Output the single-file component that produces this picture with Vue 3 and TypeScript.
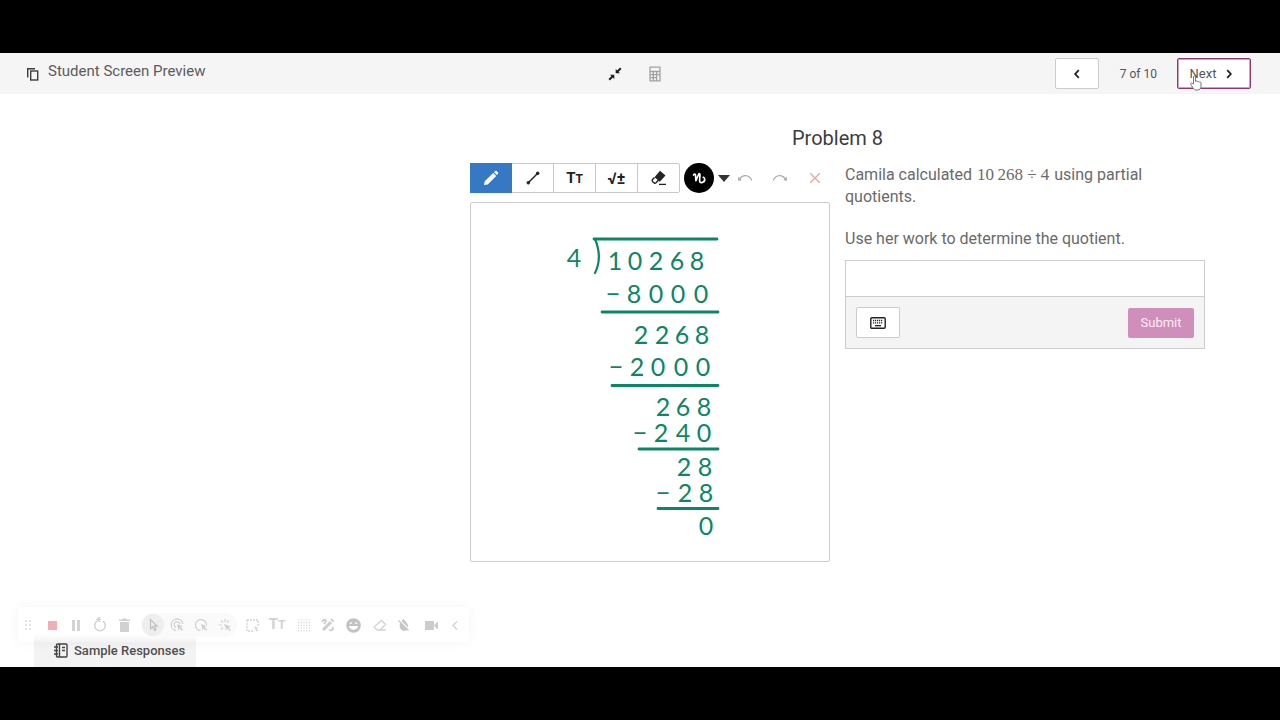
<script setup lang="ts">
import { ref } from 'vue'

interface InkRow {
  text: string
  x: number[]
  y: number
}

const answer = ref('')

const inkRows: InkRow[] = [
  { text: '4', x: [104], y: 65 },
  { text: '10268', x: [145, 165, 186, 207, 227], y: 68 },
  { text: '−8000', x: [143, 164, 186, 208, 231], y: 101 },
  { text: '2268', x: [171, 192, 212, 232], y: 142 },
  { text: '−2000', x: [146, 167, 188, 211, 233], y: 174 },
  { text: '268', x: [193, 213, 234], y: 214 },
  { text: '−240', x: [170, 191, 213, 234], y: 240 },
  { text: '28', x: [214, 235], y: 274 },
  { text: '−28', x: [193, 215, 236], y: 300 },
  { text: '0', x: [236], y: 333 },
]
</script>

<template>
  <div class="frame">
    <div class="app">
      <header class="topbar">
        <div class="brand">
          <svg width="14" height="14" viewBox="0 0 14 14" fill="none" stroke="#3c3c3c" stroke-width="1.4">
            <path d="M1.7 10.5V1.7H9" />
            <rect x="4.7" y="4" width="7" height="9" />
          </svg>
          <span>Student Screen Preview</span>
        </div>
        <div class="tools">
          <button class="plain" aria-label="Collapse">
            <svg width="16" height="16" viewBox="0 0 16 16" fill="#222" stroke="#222">
              <path d="M8.7 7.3V3l4.3 4.3z M7.3 8.7V13L3 8.700z" stroke="none" />
              <path d="M10 6l3.800-3.800M6 10l-3.800 3.800" stroke-width="2" />
            </svg>
          </button>
          <button class="plain" aria-label="Calculator">
            <svg width="16" height="16" viewBox="0 0 16 16" fill="none" stroke="#a2a2a2" stroke-width="1.300">
              <path d="M3 1.200h10v13.600H3zM3 5.500H13M3 8.600H13M3 11.700h6.600M6.300 5.500v9.300M9.600 5.500v9.300" />
            </svg>
          </button>
        </div>
        <nav class="pager">
          <button class="btn" aria-label="Previous">
            <svg width="8" height="10" viewBox="0 0 8 10" fill="none" stroke="#222" stroke-width="1.800"><path d="M5.800 1.200L2.200 5l3.600 3.800" /></svg>
          </button>
          <span class="count">7 of 10</span>
          <button class="btn next">
            <span>Next</span>
            <svg width="8" height="10" viewBox="0 0 8 10" fill="none" stroke="#222" stroke-width="1.800"><path d="M2.200 1.200L5.800 5 2.200 8.800" /></svg>
            <svg class="hand" width="12" height="16" viewBox="0 0 12 16" fill="#fff" stroke="#777" stroke-width="1">
              <path d="M3.500 9V2c0-1.600 2-1.600 2 0v4.500c.3-.9 1.900-.8 2 .3.400-.7 1.700-.6 1.800.4.500-.6 1.700-.3 1.700.8v3c0 2.600-1.300 4-3.500 4H6c-1.300 0-2-.6-2.700-1.700L.8 9.600c-.7-1.200.7-2.100 1.500-1.200z" />
            </svg>
          </button>
        </nav>
      </header>

      <main class="lesson">
        <h1>Problem 8</h1>
        <div class="columns">
          <section class="work">
            <div class="sketchbar">
              <div class="group">
                <button class="tool active" aria-label="Pencil">
                  <svg width="18" height="18" viewBox="0 0 18 18" fill="#fff"><path d="M2 16l.7-3.700L11.200 4l3 3-8.500 8.400zM12 3.200l1.200-1.100c.5-.5 1-.5 1.500 0L16 3.500c.4.4.4.900 0 1.300L15 6.100z" /></svg>
                </button>
                <button class="tool" aria-label="Line">
                  <svg width="16" height="16" viewBox="0 0 16 16" fill="#222" stroke="#222"><path d="M3.500 12.500l9-9" stroke-width="1.500" /><circle cx="3.300" cy="12.800" r="1.300" /><circle cx="12.700" cy="3.300" r="1.300" /></svg>
                </button>
                <button class="tool letters" aria-label="Text"><span>T</span><small>T</small></button>
                <button class="tool math" aria-label="Math">√±</button>
                <button class="tool" aria-label="Eraser">
                  <svg width="18" height="18" viewBox="0 0 18 18"><path d="M10 1.800l5.500 4.700-5.700 6.300-5.300-4.600z" fill="#222" /><path d="M4.500 8.500L2.400 10.700c-.5.700-.4 1.200.1 1.700l1.700 1.500c.6.500 1.300.4 1.800-.1l3-3.300" fill="none" stroke="#222" stroke-width="1.400" /><path d="M9 15.400h7" stroke="#222" stroke-width="1.300" /></svg>
                </button>
              </div>
              <button class="ink" aria-label="Pen colour">
                <svg width="16" height="16" viewBox="0 0 16 16" fill="none" stroke="#fff" stroke-width="1.700" stroke-linecap="round" stroke-linejoin="round"><path d="M2.500 5C3.800 3.600 4.500 4.200 4.600 6l.3 4.600L7.600 4.500c.6-1.200 1.500-1 1.400.3l-.4 5.400c-.1 1.700.7 2.700 2.200 2.400 2-.5 3.100-2 2.900-3.600-.1-.9-.7-1.500-1.500-1.700" /></svg>
              </button>
              <svg class="caret" width="12" height="7" viewBox="0 0 12 7" fill="#333"><path d="M0 0h12L6 7z" /></svg>
              <button class="edit undo" aria-label="Undo">
                <svg width="16" height="8" viewBox="0 0 16 8" fill="none" stroke="#aaa" stroke-width="1.200"><path d="M2.500 5.500C5.500.2 12 .2 14.800 6.500" /><path d="M.8 6.800l.6-4 3.400 3.500z" fill="#aaa" stroke="none" /></svg>
              </button>
              <button class="edit redo" aria-label="Redo">
                <svg width="16" height="8" viewBox="0 0 16 8" fill="none" stroke="#aaa" stroke-width="1.200"><path d="M13.500 5.500C10.500.2 4 .2 1.200 6.500" /><path d="M15.200 6.800l-.6-4-3.400 3.500z" fill="#aaa" stroke="none" /></svg>
              </button>
              <button class="edit clear" aria-label="Clear">
                <svg width="10" height="10" viewBox="0 0 10 10" stroke="#e5aaa8" stroke-width="1.400"><path d="M0 0l10 10M10 0L0 10" /></svg>
              </button>
            </div>
            <div class="canvas">
              <svg viewBox="1 1 358 358">
                <text v-for="row in inkRows" :key="row.y" :x="row.x.join(' ')" :y="row.y" text-anchor="middle">{{ row.text }}</text>
                <g fill="none" stroke="#0c8666" stroke-width="2.800" stroke-linecap="round">
                  <path d="M124 37H247" /><path d="M125 37c5 12 5 24 0 34" stroke-width="2.200" />
                  <path d="M132 110H248M142 183.500H248M169 247H248M188 306.500H248" />
                </g>
              </svg>
            </div>
          </section>

          <section class="question">
            <p>Camila calculated <span class="formula">10&#8201;268 ÷ 4</span> using partial quotients.</p>
            <p>Use her work to determine the quotient.</p>
            <form class="answer" @submit.prevent>
              <input v-model="answer" type="text" aria-label="Answer" />
              <div class="actions">
                <button type="button" class="btn" aria-label="Keyboard">
                  <svg width="16" height="12" viewBox="0 0 16 12" fill="none" stroke="#222"><rect x=".8" y=".8" width="14.400" height="10.400" rx="1" stroke-width="1.400" /><path d="M3 3.500h10M3 5.800h10" stroke-width="1.300" stroke-dasharray="1.200 .8" /><path d="M5 8.700h6" stroke-width="1.300" /></svg>
                </button>
                <button type="submit" class="submit">Submit</button>
              </div>
            </form>
          </section>
        </div>
      </main>

      <button class="responses">
        <svg width="14" height="15" viewBox="0 0 14 15" fill="none" stroke="#444" stroke-width="1.400"><rect x="2.500" y="1" width="10.500" height="13" rx="1" /><path d="M5.500 1v13M0 4h4M0 7.500h4M0 11h4M8 4.500h3M8 7.500h3" /></svg>
        <span>Sample Responses</span>
      </button>

      <div class="recorder">
        <svg width="22" height="24" viewBox="1 0 22 24" stroke="#ddd" stroke-width="2" stroke-dasharray="2 2"><path d="M9 7v11M13 7v11" /></svg>
        <svg width="24" height="24" viewBox="0 0 24 24"><path d="M8 8h9v9H8z" fill="#f0a0a8" /></svg>
        <svg width="24" height="24" viewBox="0 0 24 24" stroke="#ccc" stroke-width="3"><path d="M9.500 7v11M14.500 7v11" /></svg>
        <svg width="24" height="24" viewBox="0 0 24 24" fill="none" stroke="#ccc" stroke-width="1.500"><path d="M9 8.200a5.300 5.300 0 1 0 6 0M13 6.500H9.500M12 4L9 6.500 12 9" /></svg>
        <svg width="24" height="24" viewBox="0 0 24 24" fill="#c8c8c8"><path d="M7 6.500h3l1-1h3l1 1h3V8H7zM8 9h9v9c0 .6-.4 1-1 1H9c-.6 0-1-.4-1-1z" /></svg>
        <div class="modes">
          <span class="mode"><svg width="20" height="20" viewBox="0 0 20 20" fill="none" stroke="#bbb" stroke-width="1.300"><path d="M7.500 4.500v9.200l2.300-2 1.700 3.600 1.500-.7-1.600-3.500H14z" /></svg></span>
          <svg width="24" height="24" viewBox="0 0 24 24" fill="none" stroke="#ccc" stroke-width="1.300"><path d="M11 17.500A5.800 5.800 0 1 1 17.800 11M11 14.500A3 3 0 1 1 15 11" /><path d="M12 11l6 2.300-2.300 1 2.500 2.500-1.200 1.200-2.500-2.500-1 2.200z" fill="#ccc" stroke="none" /></svg>
          <svg width="24" height="24" viewBox="0 0 24 24" fill="none" stroke="#ccc" stroke-width="1.300"><path d="M11.500 17.500A5.500 5.500 0 1 1 17.500 12" /><path d="M12 11l6 2.300-2.300 1 2.500 2.500-1.200 1.200-2.500-2.500-1 2.200z" fill="#ccc" stroke="none" /></svg>
          <svg width="24" height="24" viewBox="0 0 24 24" stroke="#ccc" stroke-width="1.200"><path d="M6 12h3M8 7.500l2 2M12 6v3M16 7.500l-2 2M8 16.500l2-2" /><path d="M11 11l7 2.500-2.500 1 2.500 2.500-1 1-2.500-2.500-1 2.200z" fill="#ccc" stroke="none" /></svg>
        </div>
        <svg class="gap" width="24" height="24" viewBox="0 0 24 24" fill="none" stroke="#ccc" stroke-width="1.300"><path d="M7 7h11v7M7 7v11h7" stroke-dasharray="2 1" /><path d="M14 13l4.500 2-2 .8 1.500 2-1.200.8-1.300-2z" fill="#ccc" stroke="none" /></svg>
        <span class="letters faint"><span>T</span><small>T</small></span>
        <svg width="24" height="24" viewBox="0 0 24 24" stroke="#ccc" stroke-width="1.200" stroke-dasharray="1.200 1.500"><path d="M7 7h12M7 9.700h12M7 12.400h12M7 15.100h12M7 17.800h12" /></svg>
        <svg width="24" height="24" viewBox="0 0 24 24" fill="none" stroke="#c4c4c4" stroke-width="1.800"><path d="M7 9c1-3 5-3 3.500 0L9 11M14 17c3 1 5-1 3.500-3" /><path d="M8 17l8-8" stroke-width="3" /><path d="M16 6l2.500 2.500" /></svg>
        <svg class="face" width="24" height="24" viewBox="0 0 24 24"><circle cx="12.500" cy="12.500" r="7.300" fill="#b8b8b8" /><path d="M8 13h9c0 5-9 5-9 0zM8.500 10.700c.3-2 2.500-2 2.700 0M13.800 10.700c.3-2 2.500-2 2.700 0" fill="#fff" /></svg>
        <svg width="24" height="24" viewBox="0 0 24 24" fill="none" stroke="#ccc" stroke-width="1.300"><path d="M10 17l-3-3 7.500-6.500 4 4-5.500 5.500zM13 17h6" /></svg>
        <svg width="24" height="24" viewBox="0 0 24 24"><path d="M12.500 6c4 4.500 5 6 4.500 8.500L10.500 8zM9.300 9.800l7 7c-4 3-9.500-1-7-7z" fill="#bbb" /><path d="M7.500 7.500l10 10" stroke="#bbb" stroke-width="1.200" /></svg>
        <svg class="cam" width="24" height="24" viewBox="0 0 24 24" fill="#c4c4c4"><path d="M6 8h9v9H6zM15.500 11.500L19 8.500v8l-3.500-3z" /></svg>
        <svg width="24" height="24" viewBox="0 0 24 24" fill="none" stroke="#ccc" stroke-width="1.400"><path d="M14 8.500l-4 4 4 4" /></svg>
      </div>
    </div>
  </div>
</template>

<style>
body {
  margin: 0;
  background: #000;
}
</style>

<style scoped>
.frame {
  box-sizing: border-box;
  min-height: 100vh;
  padding: 53px 0;
  display: flex;
  flex-direction: column;
  background: #000;
  font-family: Roboto, "Liberation Sans", sans-serif;
  color: #6a6a6a;
}
.app {
  position: relative;
  flex: 1;
  display: flex;
  flex-direction: column;
  background: #fff;
}
button {
  font: inherit;
  color: inherit;
  padding: 0;
  border: 0;
  background: none;
}
svg {
  display: block;
  flex: none;
}
.topbar {
  display: grid;
  grid-template-columns: 1fr auto 1fr;
  align-items: center;
  height: 41px;
  padding: 0 29px 0 19px;
  background: #f5f5f5;
}
.brand {
  display: flex;
  align-items: center;
  gap: 8px;
  margin-left: 7px;
  font-size: 15px;
  line-height: 20px;
  color: #5c5c5c;
}
.brand span {
  padding-bottom: 5px;
}
.tools {
  display: flex;
  gap: 24px;
}
.pager {
  display: flex;
  justify-content: flex-end;
  align-items: center;
}
.count {
  margin: 0 20px 0 21px;
  font-size: 12px;
  color: #555;
}
.btn {
  box-sizing: border-box;
  display: flex;
  align-items: center;
  justify-content: center;
  width: 44px;
  height: 31px;
  border: 1px solid #ccc;
  border-radius: 2px;
  background: #fff;
}
.next {
  position: relative;
  gap: 9px;
  width: 74px;
  padding-right: 5px;
  border-color: #8a3a70;
  box-shadow: inset 0 0 0 1px #c9a3bc;
  font-size: 13px;
  color: #555;
}
.hand {
  position: absolute;
  left: 12px;
  top: 16px;
}
.lesson {
  box-sizing: border-box;
  flex: 1;
  width: 100%;
  max-width: 735px;
  margin: 0 75px 0 auto;
  padding-top: 30px;
}
h1 {
  margin: 0 0 11px;
  font-size: 20px;
  line-height: 28px;
  font-weight: 400;
  text-align: center;
  color: #3c3c3c;
}
.columns {
  display: grid;
  grid-template-columns: 1fr 1fr;
  gap: 15px;
}
.sketchbar {
  display: flex;
  align-items: center;
  height: 30px;
  margin-bottom: 9px;
}
.group {
  display: flex;
  box-sizing: border-box;
  height: 30px;
  border: 1px solid #c8c8c8;
  border-radius: 2px;
}
.tool {
  box-sizing: border-box;
  display: flex;
  align-items: center;
  justify-content: center;
  width: 42px;
  border-right: 1px solid #c8c8c8;
  color: #222;
}
.tool:last-child {
  width: 41px;
  border-right: 0;
}
.tool.active {
  margin: -1px 0 -1px -1px;
  background: #3578c4;
  border-right: 0;
}
.letters {
  align-items: baseline;
  font-weight: 700;
  font-size: 15px;
  line-height: 28px;
}
.letters small {
  font-size: 12px;
}
.math {
  font-size: 16px;
  font-weight: 700;
}
.ink {
  display: flex;
  align-items: center;
  justify-content: center;
  width: 30px;
  height: 30px;
  margin: 0 4px;
  border-radius: 50%;
  background: #000;
}
.undo {
  margin-left: 7px;
}
.redo {
  margin-left: 19px;
}
.clear {
  margin-left: 22px;
}
.canvas {
  border: 1px solid #ccc;
  border-radius: 2px;
}
.canvas svg {
  width: 100%;
}
.canvas text {
  font-family: Lato, "Open Sans", sans-serif;
  font-size: 25px;
  fill: #0c8666;
}
.question p {
  margin: 0 0 20px;
  font-size: 16px;
  line-height: 22px;
}
.question {
  padding-top: 1px;
}
.question p + p {
  margin-bottom: 10px;
}
.formula {
  margin: 0 1px;
  font-family: "Liberation Serif", serif;
  font-size: 17px;
  line-height: 20px;
}
.answer {
  border: 1px solid #ccc;
}
.answer input {
  display: block;
  box-sizing: border-box;
  width: 100%;
  height: 36px;
  padding: 0 10px;
  border: 0;
  border-bottom: 1px solid #ccc;
  font: inherit;
  outline: none;
}
.actions {
  display: flex;
  justify-content: space-between;
  align-items: center;
  padding: 10px;
  background: #f4f4f4;
}
.submit {
  width: 66px;
  height: 30px;
  border-radius: 2px;
  background: #d08fba;
  color: #fbeef6;
  font-size: 13px;
}
.responses {
  align-self: flex-start;
  display: flex;
  align-items: center;
  gap: 6px;
  height: 33px;
  margin-left: 34px;
  padding: 0 11px 0 20px;
  background: #f3f3f3;
  color: #505050;
  font-size: 13px;
  font-weight: 500;
}
.recorder {
  position: absolute;
  left: 18px;
  bottom: 25px;
  box-sizing: border-box;
  display: flex;
  align-items: center;
  height: 35px;
  padding-right: 2px;
  border-radius: 4px;
  background: linear-gradient(#fff 27px, #fafafa00 35px);
  box-shadow: 0 0 12px #0000000c;
}
.recorder > svg,
.modes svg {
  opacity: 0.85;
}
.modes {
  display: flex;
  align-items: center;
  margin-left: 5px;
  border-radius: 12px;
  background: #fafafa;
}
.mode {
  display: flex;
  align-items: center;
  justify-content: center;
  width: 22px;
  height: 22px;
  margin: 0 1px;
  border-radius: 50%;
  background: #eee;
}
.gap {
  margin-left: 3px;
}
.faint {
  width: 26px;
  margin-right: 1px;
  color: #d2d2d2;
  text-align: center;
}
.face {
  margin: 0 2px;
}
.cam {
  margin-left: 4px;
}
</style>
